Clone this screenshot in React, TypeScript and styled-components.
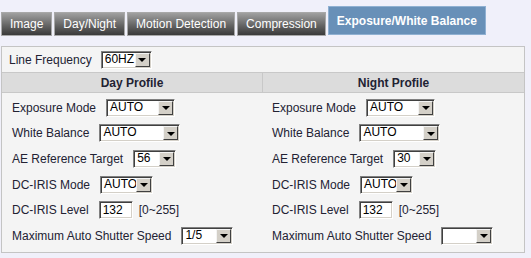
import React from 'react';
import styled, { createGlobalStyle } from 'styled-components';

const GlobalStyle = createGlobalStyle`
  html, body {
    margin: 0;
    padding: 0;
    background: #f0f0fa;
    font-family: 'Liberation Sans', Arial, sans-serif;
    font-size: 12px;
    color: #222233;
  }
`;

const Page = styled.div`
  width: 531px;
  height: 258px;
  padding: 6px 0 0 1px;
  box-sizing: border-box;
`;

const TabBar = styled.div`
  display: flex;
  align-items: flex-end;
  gap: 2px;
  height: 30px;
`;

const Tab = styled.div<{ $active?: boolean }>`
  box-sizing: border-box;
  height: ${p => (p.$active ? '29px' : '24px')};
  padding: 0 8px;
  margin-bottom: ${p => (p.$active ? '1px' : '0')};
  display: flex;
  align-items: center;
  color: #ffffff;
  font-weight: ${p => (p.$active ? 'bold' : 'normal')};
  border: 1px solid ${p => (p.$active ? '#8fb0d2' : '#a8a8a8')};
  background: ${p =>
    p.$active ? '#6890b8' : 'linear-gradient(#a0a0a0, #666666 55%, #3a3a3a)'};
  white-space: nowrap;
`;

const Panel = styled.div`
  margin-top: 10px;
  width: 524px;
  height: 207px;
  box-sizing: border-box;
  border: 1px solid #c4c4c4;
  background: #f4f4f4;
  display: flex;
  flex-direction: column;
`;

const FreqRow = styled.div`
  height: 25px;
  display: flex;
  align-items: center;
  gap: 9px;
  padding-left: 7px;
  border-bottom: 1px solid #c8c8c8;
`;

const Columns = styled.div`
  display: grid;
  grid-template-columns: 261px 1fr;
`;

const HeadCell = styled.div<{ $divider?: boolean }>`
  height: 19px;
  display: flex;
  align-items: center;
  justify-content: center;
  font-weight: bold;
  background: #dcdcdc;
  border-bottom: 1px solid #c8c8c8;
  border-right: ${p => (p.$divider ? '1px solid #c8c8c8' : 'none')};
`;

const Column = styled.div<{ $pad: number }>`
  display: flex;
  flex-direction: column;
  padding: 2px 0 0 ${p => p.$pad}px;
`;

const Row = styled.div`
  height: 25.6px;
  display: flex;
  align-items: center;
  gap: 10px;
  white-space: nowrap;
`;

const SelectBox = styled.span<{ $w: number }>`
  box-sizing: border-box;
  width: ${p => p.$w}px;
  height: 18px;
  display: inline-flex;
  align-items: stretch;
  background: #ffffff;
  border: 1px solid;
  border-color: #808080 #ffffff #ffffff #808080;
  box-shadow: inset 1px 1px 0 #404040, inset -1px -1px 0 #d4d0c8;
  padding: 1px;
`;

const SelectValue = styled.span`
  flex: 1;
  padding-left: 2px;
  line-height: 13px;
  font-size: 12px;
  color: #000;
  overflow: hidden;
`;

const ArrowBtn = styled.span`
  box-sizing: border-box;
  width: 15px;
  background: #d4d0c8;
  border: 1px solid;
  border-color: #f4f4f4 #404040 #404040 #f4f4f4;
  display: flex;
  align-items: center;
  justify-content: center;

  &::after {
    content: '';
    border-left: 4px solid transparent;
    border-right: 4px solid transparent;
    border-top: 4px solid #000;
    margin-top: 1px;
  }
`;

const TextBox = styled.span`
  box-sizing: border-box;
  width: 34px;
  height: 18px;
  display: inline-flex;
  align-items: center;
  padding-left: 3px;
  background: #ffffff;
  color: #000;
  border: 1px solid;
  border-color: #808080 #ffffff #ffffff #808080;
  box-shadow: inset 1px 1px 0 #404040, inset -1px -1px 0 #d4d0c8;
`;

const Range = styled.span`
  margin-left: -4px;
`;

const Select = ({ value, w }: { value: string; w: number }) => (
  <SelectBox $w={w}>
    <SelectValue>{value}</SelectValue>
    <ArrowBtn />
  </SelectBox>
);

const tabs = ['Image', 'Day/Night', 'Motion Detection', 'Compression'];

type Profile = {
  exposure: string;
  target: string;
  level: string;
  shutter: string;
};

const ProfileColumn = ({ p, pad }: { p: Profile; pad: number }) => (
  <Column $pad={pad}>
    <Row>
      Exposure Mode
      <Select value={p.exposure} w={69} />
    </Row>
    <Row>
      White Balance
      <Select value="AUTO" w={81} />
    </Row>
    <Row>
      AE Reference Target
      <Select value={p.target} w={43} />
    </Row>
    <Row>
      DC-IRIS Mode
      <Select value="AUTO" w={53} />
    </Row>
    <Row>
      DC-IRIS Level
      <TextBox>{p.level}</TextBox>
      <Range>[0~255]</Range>
    </Row>
    <Row>
      Maximum Auto Shutter Speed
      <Select value={p.shutter} w={52} />
    </Row>
  </Column>
);

export default function App() {
  return (
    <Page>
      <GlobalStyle />
      <TabBar>
        {tabs.map(t => (
          <Tab key={t}>{t}</Tab>
        ))}
        <Tab $active>Exposure/White Balance</Tab>
      </TabBar>
      <Panel>
        <FreqRow>
          Line Frequency
          <Select value="60HZ" w={51} />
        </FreqRow>
        <Columns>
          <HeadCell $divider>Day Profile</HeadCell>
          <HeadCell>Night Profile</HeadCell>
          <ProfileColumn p={{ exposure: 'AUTO', target: '56', level: '132', shutter: '1/5' }} pad={10} />
          <ProfileColumn p={{ exposure: 'AUTO', target: '30', level: '132', shutter: '' }} pad={9} />
        </Columns>
      </Panel>
    </Page>
  );
}
